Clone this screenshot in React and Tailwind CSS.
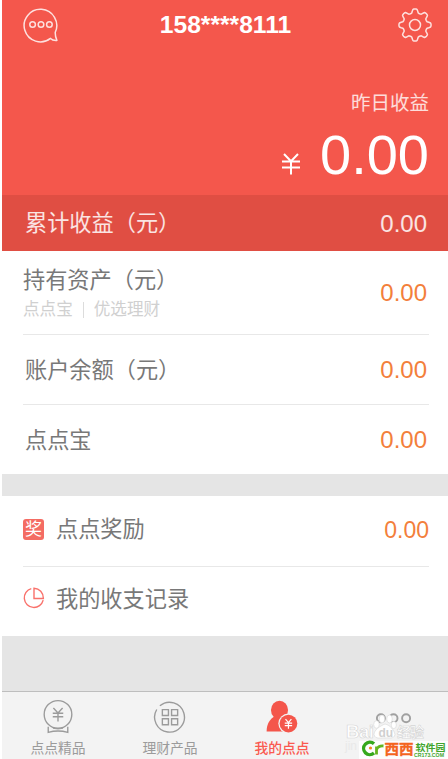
const cjk = 'font-["Liberation_Sans","Noto_Sans_CJK_SC",sans-serif]';

function ChatIcon() {
  return (
    <svg className="block h-[36px] w-[36px]" viewBox="0 0 36 36" fill="none" stroke="#fff" strokeOpacity="0.82" strokeWidth="1.5">
      <path d="M27.5 31.4A16.3 16.3 0 1 1 32.2 25.5C32.2 28.5 32.8 31 33.9 33.4C31.5 33.6 29 33 27.5 31.4Z" strokeLinejoin="round" />
      <circle cx="9.6" cy="17.5" r="2.8" />
      <circle cx="18" cy="17.5" r="2.8" />
      <circle cx="26.4" cy="17.5" r="2.8" />
    </svg>
  );
}

// Eight rounded teeth, traced around the centre of a 36 unit box.
function gearPath() {
  const pts = [];
  for (let i = 0; i < 96; i++) {
    const a = (i / 96) * Math.PI * 2;
    const w = Math.cos(8 * a);
    const r = 14.1 + 2 * Math.tanh(2.2 * w);
    pts.push((18 + r * Math.cos(a)).toFixed(2) + ' ' + (18 + r * Math.sin(a)).toFixed(2));
  }
  return 'M' + pts.join('L') + 'Z';
}

function GearIcon() {
  return (
    <svg className="block h-[36px] w-[36px]" viewBox="0 0 36 36" fill="none" stroke="#fff" strokeOpacity="0.82" strokeWidth="1.5">
      <path d={gearPath()} strokeLinejoin="round" />
      <circle cx="18" cy="18" r="5.5" />
    </svg>
  );
}

function YenIcon() {
  return (
    <svg className="block h-[22px] w-[20px]" viewBox="0 0 20 22" fill="none" stroke="#fff" strokeWidth="2">
      <path d="M3 1L10 8.2L17 1M1 8.4H19M1 14.6H19M10 8V21.4" />
    </svg>
  );
}

function PieIcon() {
  return (
    <svg className="block h-[22px] w-[22px]" viewBox="0 0 22 22" fill="none" stroke="#f9716b" strokeWidth="1.4">
      <path d="M8.3 1.6A9.6 9.6 0 1 0 20.2 13.2" />
      <path d="M11 1.2V11.5H20.4C20.4 5.6 16.5 1.5 11 1.2Z" />
    </svg>
  );
}

function MedalIcon() {
  return (
    <svg className="block h-[38px] w-[36px]" viewBox="0 0 36 38" fill="none" stroke="#9b9b9b" strokeWidth="1.5">
      <circle cx="18" cy="16.7" r="15" />
      <path d="M13 9.7L18 15.2L23 9.7M12.3 15.5H23.7M12.3 19.3H23.7M18 15V24.3" />
      <path d="M7.4 30V36.2Q18 33.2 28.6 36.2V30" />
      <path d="M12.5 31.8Q18 33.4 23.5 31.8" strokeWidth="1" />
    </svg>
  );
}

function GridIcon() {
  return (
    <svg className="block h-[38px] w-[36px]" viewBox="0 0 36 38" fill="none" stroke="#9b9b9b" strokeWidth="1.5">
      <path d="M3.6 11.4A16.2 16.2 0 1 0 7 7.4" />
      <path d="M9.7 11.5h6.6v6.4h-6.6zM19.7 11.5h6.6v6.4h-6.6zM9.7 21.5h6.6v6.4h-6.6zM19.7 21.5h6.6v6.4h-6.6z" />
    </svg>
  );
}

function UserIcon() {
  return (
    <svg className="block h-[38px] w-[36px]" viewBox="0 0 36 38" fill="#f4564b">
      <ellipse cx="15.3" cy="12" rx="9.3" ry="10" />
      <path d="M1.3 35.2C1.3 27 4.8 21.6 10.5 18.5H20L21 35.2Z" />
      <circle cx="25" cy="26.7" r="11" fill="#f3f3f3" />
      <circle cx="25" cy="26.7" r="9.6" />
      <path d="M21.8 21.9L25 25.7L28.2 21.9M21 26.1H29M21 28.9H29M25 25.9V32.4" stroke="#fff" strokeWidth="1.3" fill="none" />
    </svg>
  );
}

function DotsIcon() {
  return (
    <svg className="block h-[38px] w-[36px]" viewBox="0 0 36 38" fill="none" stroke="#a0a0a0" strokeWidth="1.9">
      <circle cx="4.9" cy="19.3" r="4" />
      <circle cx="17.5" cy="19.3" r="4" />
      <circle cx="30.1" cy="19.3" r="4" />
    </svg>
  );
}

function Row({ className, label, value, icon, sub }) {
  return (
    <div className={'flex items-center justify-between ' + className}>
      <div className="flex items-center">
        {icon}
        <div>
          <div className="text-[22.2px] leading-[30px] whitespace-nowrap text-[#787878]">{label}</div>
          {sub}
        </div>
      </div>
      {value}
    </div>
  );
}

function Amount({ className = '' }) {
  return <span className={'text-2xl text-[#f37f3b] ' + className}>0.00</span>;
}

function Tab({ icon, label, active }) {
  return (
    <div className="flex w-28 shrink-0 flex-col items-center pt-[7px]">
      {icon}
      <span className={'mt-[5px] text-[13.8px] leading-5 whitespace-nowrap ' + (active ? 'font-medium text-[#fa5a50]' : 'text-[#9b9b9b]')}>{label}</span>
    </div>
  );
}

function Watermarks() {
  return (
    <div className="absolute right-0 bottom-0 h-[54px] w-[108px]">
      <svg className="block h-[54px] w-[108px]" viewBox="0 0 108 54">
        <g fill="#fff" stroke="#d5d5d5" strokeWidth="0.6">
          <g fontFamily="Liberation Sans, Noto Sans CJK SC, sans-serif" fontWeight="bold">
            <text x="6" y="32.5" fontSize="18.5" textLength="28">Bai</text>
            <text x="57" y="31.5" fontSize="14" textLength="27">经验</text>
          </g>
          <ellipse cx="36.5" cy="19.5" rx="2.8" ry="3.8" />
          <ellipse cx="42" cy="14" rx="2.8" ry="4" />
          <ellipse cx="49.5" cy="14" rx="2.8" ry="4" />
          <ellipse cx="53.8" cy="20" rx="2.6" ry="3.6" />
          <path d="M45 19C40 21 34 25 34 29.5C35 35 42 32.5 45 33C49 32.5 54 34.5 55 29.5C54 25 50 20 45 19Z" />
        </g>
        <text x="38.5" y="31.5" fontSize="12" fontWeight="bold" fill="#d0d0d0" fontFamily="Liberation Sans, sans-serif">du</text>
        <text x="5" y="45" fontSize="12" fill="#e9e9e9" fontFamily="Liberation Sans, sans-serif">jin</text>
        <rect x="19" y="36" width="89" height="18" fill="#fff" fillOpacity="0.8" />
        <path d="M34 38.8A6.2 6.2 0 1 0 34 48" fill="none" stroke="#35a81c" strokeWidth="3.4" />
        <path d="M36.5 49.5V41.5M36.5 44.5Q38.5 40.5 43.5 41" fill="none" stroke="#63b51d" strokeWidth="2.8" />
        <circle cx="30.5" cy="43" r="1.6" fill="#f08a1d" />
        <g fontFamily="Noto Sans CJK SC, sans-serif" fontWeight="bold">
          <text x="44.5" y="48.8" fontSize="14" textLength="29" lengthAdjust="spacingAndGlyphs" fill="#f4641e" stroke="#f4641e" strokeWidth="0.4">西西</text>
          <text x="75.5" y="46" fontSize="9.6" textLength="30" lengthAdjust="spacingAndGlyphs" fill="#40a52c">软件园</text>
        </g>
        <text x="74" y="51.5" fontSize="4.6" fontWeight="bold" textLength="30" lengthAdjust="spacingAndGlyphs" fill="#40a52c" fontFamily="Liberation Sans, sans-serif">CR173.COM</text>
      </svg>
    </div>
  );
}

export default function App() {
  return (
    <div className={'relative h-[759px] w-[448px] overflow-hidden bg-white pl-0.5 ' + cjk}>
      <header className="flex h-[195px] flex-col bg-[#f4574c] text-white">
        <div className="flex h-[50px] items-center justify-between pr-[15px] pl-[21px]">
          <ChatIcon />
          <h1 className="mr-[5px] text-[24.6px] leading-8 font-bold">158****8111</h1>
          <GearIcon />
        </div>
        <div className="mt-10 pr-[19px] text-right text-[19.5px] leading-[26px] text-white/80">昨日收益</div>
        <div className="flex items-start justify-end pr-[19px]">
          <div className="mt-[37px] mr-[19px]"><YenIcon /></div>
          <span className="mt-[9px] text-[56px] leading-[60px]">0.00</span>
        </div>
      </header>
      <div className="flex h-[56px] items-center justify-between bg-[#e04e43] pr-[21px] pl-[23px] text-white/85">
        <span className="pt-0.5 text-[22.2px] leading-[30px]">累计收益（元）</span>
        <span className="pt-px text-2xl">0.00</span>
      </div>
      <section className="h-[223px] bg-white pr-[19px] pl-[21px]">
        <Row
          className="h-[84px] border-b border-[#e8e8e8]"
          label={<span className="block pt-1">持有资产（元）</span>}
          sub={
            <div className="flex items-center text-[16.6px] leading-7 text-[#d0d0d0]">
              <span>点点宝</span>
              <span className="mx-[10px] h-4 w-px bg-[#dcdcdc]" />
              <span>优选理财</span>
            </div>
          }
          value={<Amount className="mr-0.5" />}
        />
        <Row className="h-[70px] border-b border-[#e8e8e8] pl-0.5" label={<span className="block pt-0.5">账户余额（元）</span>} value={<Amount className="mr-0.5" />} />
        <Row className="h-[69px] pl-0.5" label={<span className="block pt-0.5">点点宝</span>} value={<Amount className="mr-0.5" />} />
      </section>
      <div className="h-[22px] bg-[#e5e5e5]" />
      <section className="h-[140px] bg-white pr-[19px] pl-[21px]">
        <Row
          className="h-[71px] border-b border-[#e8e8e8] pb-0.5"
          label="点点奖励"
          icon={<span className="mr-3 mb-0.5 flex h-[21px] w-[21px] items-center justify-center rounded-[3px] bg-[#f46c63] text-[17px] leading-[21px] text-white">奖</span>}
          value={<span className="text-[23px] text-[#f37f3b]">0.00</span>}
        />
        <Row className="h-[68px] pb-0.5" label="我的收支记录" icon={<span className="mr-[11px] mb-1"><PieIcon /></span>} />
      </section>
      <div className="h-[55px] bg-[#e5e5e5]" />
      <nav className="flex h-[68px] border-t border-[#bebebe] bg-[#f3f3f3]">
        <Tab icon={<MedalIcon />} label="点点精品" />
        <Tab icon={<GridIcon />} label="理财产品" />
        <Tab icon={<UserIcon />} label="我的点点" active />
        <Tab icon={<DotsIcon />} label="" />
      </nav>
      <Watermarks />
    </div>
  );
}
